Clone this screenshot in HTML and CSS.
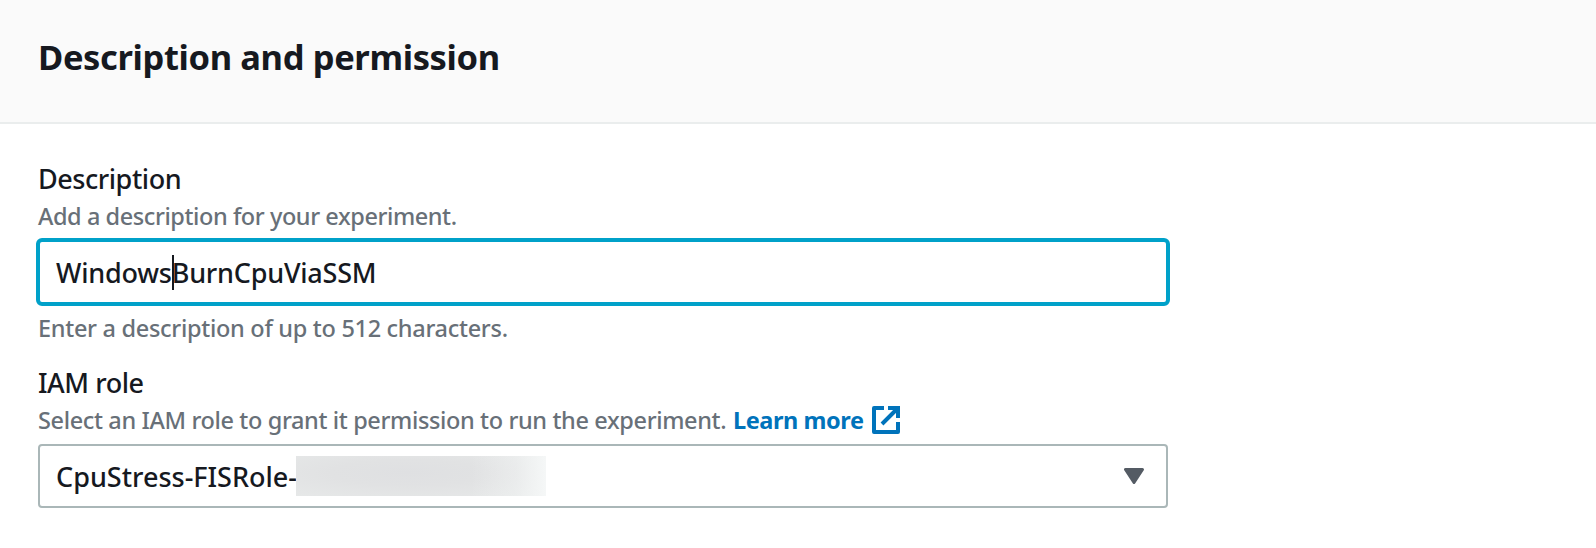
FILE: index.html
```
<!DOCTYPE html>
<html lang="en">
<head>
<meta charset="utf-8">
<title>Description and permission</title>
<link rel="stylesheet" href="styles.css">
</head>
<body>
<section class="panel">
  <header class="panel-header"><h2 class="panel-title">Description and permission</h2></header>
  <div class="panel-body">
    <div class="field">
      <div class="label">Description</div>
      <div class="hint hint-add">Add a description for your experiment.</div>
      <div class="input"><span class="before">Windows<i class="caret"></i></span><span>BurnCpuViaSSM</span></div>
      <div class="hint constraint">Enter a description of up to 512 characters.</div>
    </div>
    <div class="field">
      <div class="label label-role">IAM role</div>
      <div class="hint hint-row">
        <span class="hint-role">Select an IAM role to grant it permission to run the experiment.</span>
        <a class="link">Learn more</a>
        <svg class="external" width="28" height="28" viewBox="0 0 28 28" fill="none" stroke="currentColor" stroke-width="4">
          <path d="M12 2H2v24h24V16" stroke-linejoin="round"/>
          <path d="M16 2h10v10M25 3L10 18"/>
        </svg>
      </div>
      <div class="select">
        <span class="value">CpuStress-FISRole-</span><span class="redacted"></span>
        <svg class="arrow" width="20" height="16" viewBox="0 0 20 16"><path d="M1.5 1.5h17L10 14.5z" fill="#545b64" stroke="#545b64" stroke-width="3" stroke-linejoin="round"/></svg>
      </div>
    </div>
  </div>
</section>
</body>
</html>
```
FILE: styles.css
```
* { box-sizing: border-box; }
body {
  margin: 0;
  background: #fff;
  color: #16191f;
  font-family: "Noto Sans", sans-serif;
}
.panel-header {
  height: 124px;
  padding: 35px 38px 0;
  background: #fafafa;
  border-bottom: 2px solid #eaeded;
}
.panel-title {
  margin: 0;
  font-size: 34.5px;
  line-height: 44px;
  font-weight: 700;
  letter-spacing: -0.37px;
}
.panel-body {
  display: flex;
  flex-direction: column;
  gap: 18px;
  width: 1206px;
  padding: 36px 38px 0;
}
.label, .input, .select { font-size: 27px; font-weight: 500; }
.label { line-height: 38px; letter-spacing: -0.45px; }
.hint {
  color: #687078;
  font-size: 23.5px;
  line-height: 36px;
  font-weight: 500;
}
.hint-add { letter-spacing: -0.43px; }
.constraint { margin-top: 4px; letter-spacing: -0.3px; }
.hint-row { display: flex; align-items: center; }
.hint-role { width: 688px; letter-spacing: -0.37px; white-space: nowrap; }
.link {
  width: 130px;
  margin-left: 7px;
  color: #0073bb;
  font-weight: 700;
  letter-spacing: -0.42px;
  white-space: nowrap;
}
.external { margin-left: 9px; color: #0073bb; }
.input, .select {
  display: flex;
  align-items: center;
  background: #fff;
}
.input {
  height: 68px;
  margin: 4px -2px 0;
  padding-left: 16px;
  border: 4px solid #00a1c9;
  border-radius: 6px;
  letter-spacing: -0.22px;
}
.before { position: relative; }
.caret {
  position: absolute;
  right: -2px;
  top: 1px;
  width: 2px;
  height: 35px;
  background: #16191f;
}
.select {
  height: 64px;
  margin-top: 6px;
  padding: 0 22px 0 16px;
  border: 2px solid #aab7b8;
  border-radius: 4px;
}
.value { width: 240px; letter-spacing: 0; white-space: nowrap; }
.redacted {
  width: 250px;
  height: 40px;
  background:
    linear-gradient(90deg, rgba(245, 247, 247, 0) 70%, rgba(245, 247, 247, 0.4) 88%, #f5f7f7 100%),
    radial-gradient(ellipse at 45% 42%, #dfe0e2 0%, #e1e2e3 40%, #e7e9e9 100%);
}
.arrow { margin-left: auto; }
```
